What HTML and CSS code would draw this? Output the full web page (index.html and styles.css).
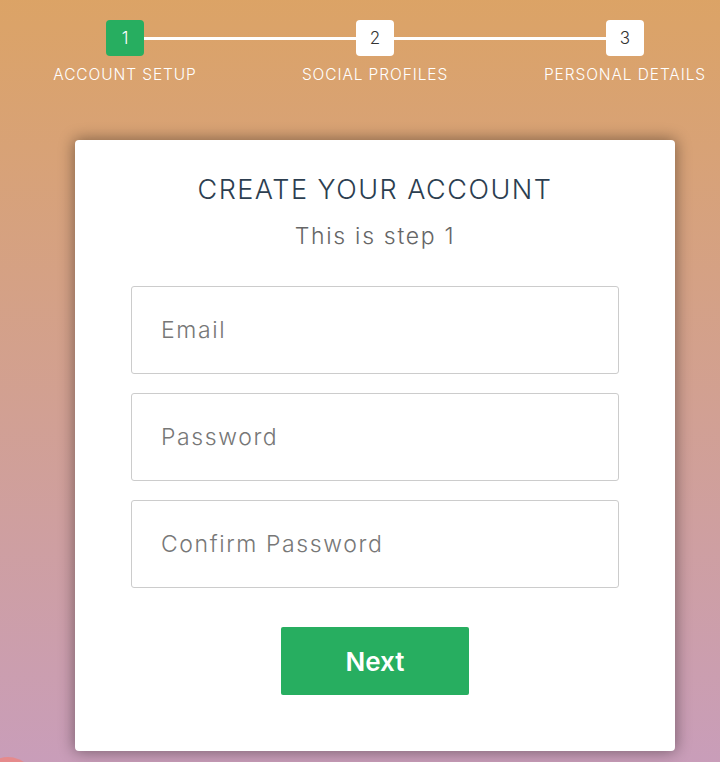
FILE: index.html
```html
<!DOCTYPE html>
<html lang="en">
<head>
    <meta charset="UTF-8">
    <meta name="viewport" content="width=device-width, initial-scale=1.0">
    <title>Sign up</title>
    <link rel="stylesheet" href="styles.css">
</head>
<body>

    <div class="wrap">
        <!-- step indicator -->
        <ul class="progressbar">
            <li class="step active"><span class="num">1</span><span class="label">Account Setup</span></li>
            <li class="step"><span class="num">2</span><span class="label">Social Profiles</span></li>
            <li class="step"><span class="num">3</span><span class="label">Personal Details</span></li>
        </ul>

        <form class="msform">
            <h2 class="fs-title">Create your account</h2>
            <h3 class="fs-subtitle">This is step 1</h3>
            <input type="text" placeholder="Email">
            <input type="password" placeholder="Password">
            <input type="password" placeholder="Confirm Password">
            <button type="button" class="next">Next</button>
        </form>
    </div>

    <div class="fab"></div>

</body>
</html>
```

FILE: styles.css
```css
* {
    margin: 0;
    padding: 0;
    box-sizing: border-box;
}

html {
    background: #fff;
}

body {
    height: 762px;
    overflow: hidden;
    font-family: 'Inter', 'Open Sans', sans-serif;
    background: linear-gradient(rgba(196, 102, 0, 0.6), rgba(155, 89, 182, 0.6)) 0 0 / 100% 1000px no-repeat;
    position: relative;
}

.wrap {
    width: 750px;
}

/* progress steps */
.progressbar {
    list-style: none;
    display: flex;
    padding-top: 20px;
}

.step {
    width: 250px;
    display: flex;
    flex-direction: column;
    align-items: center;
    position: relative;
}

.step .num {
    width: 38px;
    height: 36px;
    line-height: 36px;
    text-align: center;
    background: #fff;
    color: #333;
    border-radius: 4px;
    font-size: 17px;
    font-weight: 300;
    position: relative;
    z-index: 1;
}

.step.active .num {
    background: #27AE60;
    color: #fff;
}

/* connector to the next step */
.step:not(:last-child)::after {
    content: '';
    position: absolute;
    top: 17px;
    left: 125px;
    width: 250px;
    height: 3px;
    background: #fff;
}

.step .label {
    margin-top: 9px;
    color: #fff;
    font-size: 15.5px;
    font-weight: 300;
    text-transform: uppercase;
    white-space: nowrap;
    letter-spacing: 0.9px;
}

/* form card */
.msform {
    width: 600px;
    margin: 56px auto 0;
    background: #fff;
    border-radius: 4px;
    box-shadow: 0 0 15px 1px rgba(0, 0, 0, 0.4);
    padding: 33px 56px 56px;
    display: flex;
    flex-direction: column;
    align-items: center;
}

.fs-title {
    font-size: 27px;
    font-weight: 300;
    text-transform: uppercase;
    color: #2C3E50;
    letter-spacing: 1.5px;
}

.fs-subtitle {
    font-size: 23px;
    font-weight: 300;
    color: #666;
    letter-spacing: 1.7px;
    margin-top: 16px;
    margin-bottom: 36px;
}

.msform input {
    width: 100%;
    height: 88px;
    padding: 0 29px;
    border: 1px solid #ccc;
    border-radius: 3px;
    margin-bottom: 19px;
    font-family: inherit;
    font-size: 23px;
    font-weight: 300;
    letter-spacing: 1.6px;
    color: #2C3E50;
    outline: none;
}

.msform input::placeholder {
    color: #777;
}

.next {
    margin-top: 20px;
    width: 188px;
    height: 68px;
    border: none;
    border-radius: 2px;
    background: #27AE60;
    color: #fff;
    font-family: inherit;
    font-weight: 600;
    font-size: 26px;
    cursor: pointer;
}

.fab {
    position: absolute;
    left: -20px;
    top: 757px;
    width: 56px;
    height: 56px;
    border-radius: 50%;
    background: #e58a8c;
}
```
